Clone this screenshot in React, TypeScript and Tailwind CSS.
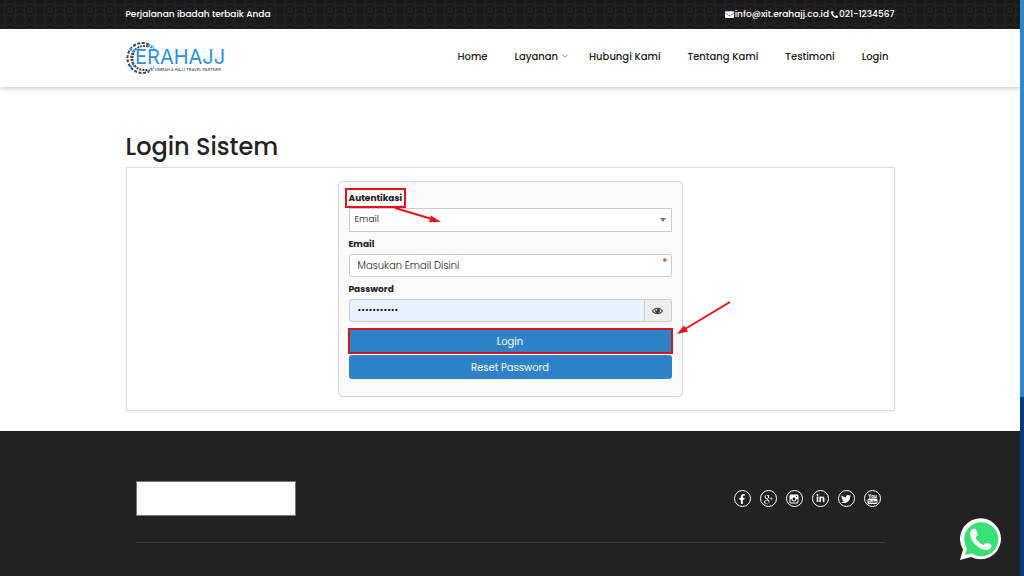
import React from 'react';
import { ChevronDown } from 'lucide-react';
import { FaEnvelope, FaFacebookF, FaLinkedinIn, FaPhoneAlt, FaTwitter } from 'react-icons/fa';
import { TiSocialGooglePlus, TiSocialInstagram } from 'react-icons/ti';

const navItems = [
  { label: 'Home' },
  { label: 'Layanan', hasMenu: true },
  { label: 'Hubungi Kami' },
  { label: 'Tentang Kami' },
  { label: 'Testimoni' },
  { label: 'Login' },
];

const YoutubeIcon: React.FC = () => (
  <svg width="11" height="12" viewBox="0 0 11 12" fontFamily="Roboto, sans-serif" fontWeight="700" textAnchor="middle" aria-hidden="true">
    <text x="5.500" y="5" fontSize="5" fill="#fff">You</text>
    <rect x="0.500" y="5.500" width="10" height="5.500" rx="1.500" fill="#fff" />
    <text x="5.500" y="10" fontSize="4" fill="#222">Tube</text>
  </svg>
);

const socials = [
  { name: 'Facebook', icon: <FaFacebookF className="w-2.5 h-2.5" /> },
  { name: 'Google Plus', icon: <TiSocialGooglePlus className="w-3.5 h-3.5" /> },
  { name: 'Instagram', icon: <TiSocialInstagram className="w-3 h-3" /> },
  { name: 'LinkedIn', icon: <FaLinkedinIn className="w-[9px] h-[9px]" /> },
  { name: 'Twitter', icon: <FaTwitter className="w-2.5 h-2.5" /> },
  { name: 'YouTube', icon: <YoutubeIcon /> },
];

const TopBar: React.FC = () => (
  <div className="relative h-[29px] bg-[#1a1a1a] text-white">
    <svg className="absolute inset-0 w-full h-full" aria-hidden="true">
      <defs>
        <pattern id="ornament" width="20" height="20" patternUnits="userSpaceOnUse">
          <g fill="none" stroke="#232323" strokeWidth="1.5">
            <circle cx="10" cy="10" r="6" />
            <circle cx="10" cy="10" r="2" />
            <circle cx="0" cy="0" r="6" />
            <circle cx="20" cy="0" r="6" />
            <circle cx="0" cy="20" r="6" />
            <circle cx="20" cy="20" r="6" />
          </g>
        </pattern>
      </defs>
      <rect width="100%" height="100%" fill="url(#ornament)" />
    </svg>
    <div className="relative max-w-[769px] h-full mx-auto flex items-center justify-between text-[9px] font-medium">
      <p>Perjalanan ibadah terbaik Anda</p>
      <div className="flex items-center gap-0.5">
        <a href="#email" className="flex items-center gap-px">
          <FaEnvelope className="w-[9px] h-[9px]" />
          info@xit.erahajj.co.id
        </a>
        <a href="#phone" className="flex items-center gap-px">
          <FaPhoneAlt className="w-[7px] h-[7px]" />
          021-1234567
        </a>
      </div>
    </div>
  </div>
);

const Logo: React.FC = () => (
  <svg width="102" height="34" viewBox="0 0 102 34" role="img" aria-label="Erahajj">
    <g fill="none">
      <path d="M22 5.500A12.500 12.500 0 0 0 7 12M7 22A12.500 12.500 0 0 0 22 28.500" stroke="#3d4650" strokeWidth="2" strokeDasharray="2 1" />
      <path d="M7 12A12.500 12.500 0 0 0 7 22" stroke="#3d4650" strokeWidth="3" strokeDasharray="2 1" />
      <path d="M23 3.500A15 15 0 1 0 23 30.500" stroke="#3d4650" strokeWidth="2" strokeDasharray="3 1.500" />
      <path d="M22 4L28 7M22 30L28 27M4 8L9 11M4 26L9 23" stroke="#3090dc" strokeWidth="3" strokeDasharray="2 1" />
    </g>
    <text x="9" y="23" fill="#2f8edb" fontSize="20" fontFamily="Inter, sans-serif">ERAHAJJ</text>
    <text x="29" y="30" fill="#4b5560" fontSize="4" fontWeight="500" fontFamily="Inter, sans-serif">UMRAH &amp; HAJJ TRAVEL PARTNER</text>
  </svg>
);

const Header: React.FC = () => (
  <header className="bg-white h-[58px] shadow-[0_1px_5px_rgba(0,0,0,0.25)]">
    <div className="max-w-[769px] h-full mx-auto flex items-center justify-between">
      <a href="#home"><Logo /></a>
      <nav className="flex items-center gap-[27px] pr-1.5 pb-1 text-[10px] font-medium text-[#222]">
        {navItems.map((item) => (
          <a key={item.label} href={`#${item.label}`} className="flex items-center gap-0.5 whitespace-nowrap">
            {item.label}
            {item.hasMenu && <ChevronDown className="w-2.5 h-2.5 text-[#4b8fc4] -mr-2" />}
          </a>
        ))}
      </nav>
    </div>
  </header>
);

const LoginForm: React.FC = () => (
  <form
    className="relative w-full max-w-[345px] mx-auto border border-[#d6d6d6] rounded bg-[#fafafa] px-2.5 pt-1.5 pb-[17px] text-[10px] text-[#444]"
    onSubmit={(e) => e.preventDefault()}
  >
    <label htmlFor="auth" className="relative flex items-center w-fit h-5 pt-0.5 text-[9px] font-bold text-[#222]">
      Autentikasi
      <span className="absolute -inset-x-1 inset-y-0 border-2 border-[#e3141c]" />
    </label>
    <div className="relative">
      <select id="auth" className="block w-full h-6 appearance-none border border-[#ccc] bg-white px-[5px] text-[9px]">
        <option>Email</option>
      </select>
      <span className="absolute right-1.5 top-2.5 border-x-3 border-x-transparent border-t-4 border-t-[#777] pointer-events-none" />
    </div>

    <label htmlFor="email" className="flex items-center h-5 mt-0.5 pt-0.5 text-[9px] font-bold text-[#222]">Email</label>
    <div className="relative">
      <input
        id="email"
        type="text"
        placeholder="Masukan Email Disini"
        className="block w-full h-[23px] border border-[#ccc] rounded-[3px] bg-white px-2 font-light placeholder:text-[#222]"
      />
      <span className="absolute right-1 top-1 leading-none font-bold text-[#d9534f]">*</span>
    </div>

    <label htmlFor="password" className="flex items-center h-5 mt-0.5 pt-0.5 text-[9px] font-bold text-[#222]">Password</label>
    <div className="flex h-[23px]">
      <input
        id="password"
        type="password"
        defaultValue="erahajj1234"
        className="min-w-0 flex-1 border border-[#ccc] rounded-l-[3px] bg-[#e8f0fe] px-2 text-[9px] text-[#111]"
      />
      <button
        type="button"
        aria-label="Lihat password"
        className="w-[27px] flex items-center justify-center border border-l-0 border-[#ccc] rounded-r-[3px] bg-[#eee]"
      >
        <svg width="11" height="8" viewBox="0 0 20 14">
          <path d="M1 7C5 0.500 15 0.500 19 7C15 13.500 5 13.500 1 7Z" fill="none" stroke="#444" strokeWidth="2" />
          <circle cx="10" cy="6.500" r="4.500" fill="#333" />
          <circle cx="8.500" cy="5" r="1.500" fill="#eee" />
        </svg>
      </button>
    </div>

    <div className="flex flex-col gap-0.5 mt-[7px] text-white">
      <button type="submit" className="relative h-6 rounded-[3px] bg-[#2e82c8]">
        Login
        <span className="absolute -inset-px border-2 border-[#d8141e]" />
      </button>
      <button type="button" className="h-6 rounded-[3px] bg-[#2e82c8]">Reset Password</button>
    </div>

    {/* Guide arrows */}
    <svg className="absolute left-0 top-0 overflow-visible pointer-events-none" width="344" height="216" aria-hidden="true">
      <g stroke="#ea1119" strokeWidth="2" fill="#ea1119">
        <path d="M56 26L93 37" />
        <path d="M102 40L90 40L92 33.500Z" stroke="none" />
        <path d="M391 120L346 147" />
        <path d="M338 152L345 143.500L349 149.500Z" stroke="none" />
      </g>
    </svg>
  </form>
);

const Footer: React.FC = () => (
  <footer className="grow bg-[#222] text-white">
    <div className="max-w-[769px] mx-auto px-2.5">
      <div className="flex items-center justify-between pt-[50px] pb-[26px] border-b border-[#3b3b3b]">
        <div className="w-40 h-[35px] bg-white border border-[#777]" />
        <ul className="flex gap-[9px] pr-1">
          {socials.map((social) => (
            <li key={social.name}>
              <a
                href={`#${social.name}`}
                aria-label={social.name}
                className="flex items-center justify-center w-[17px] h-[17px] rounded-full border border-white"
              >
                {social.icon}
              </a>
            </li>
          ))}
        </ul>
      </div>
    </div>
  </footer>
);

const App: React.FC = () => {
  return (
    <div className="flex min-h-screen font-[Poppins,Inter,sans-serif]">
      <div className="flex-1 min-w-0 flex flex-col bg-white">
        <TopBar />
        <Header />
        <main className="w-full max-w-[769px] mx-auto pt-11 pb-5">
          <h1 className="text-2xl leading-8 font-medium text-[#222]">Login Sistem</h1>
          <div className="mt-1 border border-[#ddd] py-[13px] shadow-[0_1px_2px_rgba(0,0,0,0.08)]">
            <LoginForm />
          </div>
        </main>
        <Footer />
      </div>

      {/* Scroll track */}
      <div className="w-1 flex flex-col bg-[#053a7c]">
        <div className="h-[69%] bg-[#3186cc]" />
      </div>

      <a href="#whatsapp" aria-label="WhatsApp" className="fixed right-[22px] bottom-[15px]">
        <svg width="43" height="43" viewBox="0 0 43 43">
          <path d="M1 42L4 31.500A20.500 20.500 0 1 1 12 39Z" fill="#fff" />
          <path d="M6 37L8 30.500A17 17 0 1 1 13 35.500Z" fill="#3be074" />
          <path
            d="M11 15C12 11 14 10 16.500 11C18 13 19 16 18.500 17.500L16.500 20C18.500 23.500 21 25.500 24.500 27L27 25C29 24.500 32 26 32.500 27.500C32.500 31 29 32.500 26 32C18 30.500 10.500 22 11 15Z"
            fill="#fff"
          />
        </svg>
      </a>
    </div>
  );
};

export default App;
